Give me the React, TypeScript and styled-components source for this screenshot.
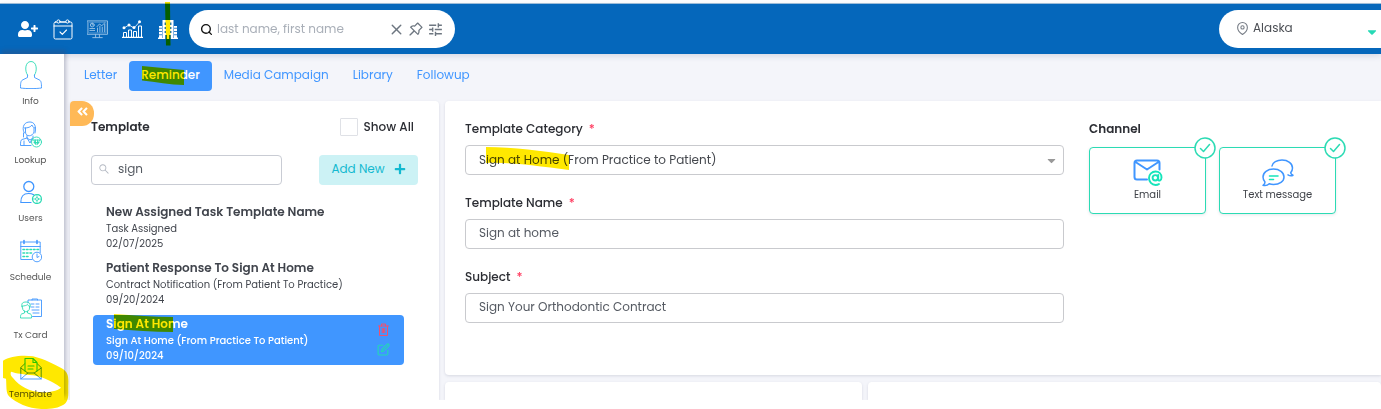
import React from 'react';
import styled, { createGlobalStyle } from 'styled-components';
import { FaUserPlus, FaCaretDown, FaAngleDoubleLeft, FaPlus } from 'react-icons/fa';
import { AiOutlinePushpin, AiOutlineSearch } from 'react-icons/ai';
import { MdTune } from 'react-icons/md';
import { FiEdit, FiMapPin, FiSearch, FiX } from 'react-icons/fi';

const BLUE = '#4096ff';
const TEAL = '#2cdbb4';
const MARKER = '#ffe800';

const GlobalStyle = createGlobalStyle`
  *, *::before, *::after { box-sizing: border-box; }
  body {
    margin: 0;
    background: #fff;
    color: #2b2d33;
    font-family: Poppins, Inter, 'Liberation Sans', sans-serif;
    font-size: 12px;
  }
  button, input, select { font: inherit; color: inherit; margin: 0; }
  button { cursor: pointer; }
`;

const App = styled.div`
  padding: 3px 0 9px;
  background: #fff;
`;

const Header = styled.header`
  position: relative;
  display: flex;
  align-items: center;
  height: 51px;
  padding-left: 17px;
  border-top: 1px solid #9dbcd8;
  background: #0567bb;
  box-shadow: 0 2px 6px rgba(60, 70, 110, 0.16);
`;

const HeaderTools = styled.div`
  display: flex;
  align-items: center;
  gap: 14px;
`;

const ToolButton = styled.button`
  position: relative;
  display: flex;
  justify-content: center;
  width: 21px;
  padding: 0;
  border: 0;
  background: none;
  color: #fff;
`;

const SearchPill = styled.form`
  display: flex;
  align-items: center;
  gap: 4px;
  width: 266px;
  height: 38px;
  margin-left: 11px;
  padding: 0 11px;
  border-radius: 19px;
  background: #fff;
  color: #6d7680;
`;

const PillInput = styled.input`
  flex: 1;
  min-width: 0;
  padding: 0;
  border: 0;
  outline: 0;
  background: none;
  &::placeholder { color: #a9afb8; opacity: 1; }
`;

const PillActions = styled.div`
  display: flex;
  align-items: center;
  gap: 2px;
`;

const PillButton = styled.button`
  display: flex;
  padding: 0;
  border: 0;
  background: none;
  color: inherit;
`;

const LocationPill = styled.button`
  display: flex;
  align-items: center;
  gap: 4px;
  width: 162px;
  height: 38px;
  margin-left: auto;
  padding: 0 2px 2px 17px;
  border: 0;
  border-radius: 19px 0 0 19px;
  background: #fff;
  color: #4c4f55;
`;

const LocationCaret = styled(FaCaretDown)`
  margin: 7px 0 0 auto;
  color: #25d9b5;
`;

const Body = styled.div`
  display: flex;
`;

const Sidebar = styled.nav`
  position: relative;
  display: flex;
  flex-direction: column;
  justify-content: space-between;
  flex: none;
  width: 64px;
  padding: 7px 3px 0 0;
  background: #fff;
  box-shadow: 2px -4px 4px rgba(70, 76, 110, 0.32);
`;

const NavLink = styled.a`
  position: relative;
  display: flex;
  flex-direction: column;
  align-items: center;
  gap: 6px;
  color: #555;
  font-size: 9px;
  line-height: 12px;
  text-decoration: none;
`;

const Main = styled.main`
  flex: 1;
  min-width: 0;
  padding: 7px 0 0 6px;
  background: #f4f5fa;
`;

const Tabs = styled.nav`
  display: flex;
  margin-bottom: 10px;
  padding-left: 2px;
`;

const Tab = styled.a<{ $active?: boolean }>`
  position: relative;
  padding: 0 12px;
  border-radius: 4px;
  background: ${(p) => (p.$active ? BLUE : 'transparent')};
  color: ${(p) => (p.$active ? '#fff' : BLUE)};
  font-weight: ${(p) => (p.$active ? 500 : 400)};
  line-height: 28px;
  height: 30px;
  text-decoration: none;
`;

const Columns = styled.div`
  display: flex;
  gap: 6px;
`;

const Card = styled.section`
  position: relative;
  border-radius: 4px;
  background: #fff;
  box-shadow: 0 1px 3px rgba(60, 66, 100, 0.16);
`;

const ListCard = styled(Card)`
  flex: none;
  width: 369px;
  border-radius: 4px 4px 0 0;
  padding: 17px 21px 34px 21px;
  clip-path: inset(-4px -4px 0 -4px);
`;

const CollapseButton = styled.button`
  position: absolute;
  top: 0;
  left: 0;
  display: flex;
  justify-content: center;
  width: 24px;
  height: 25px;
  padding: 4px 0 0;
  border: 0;
  border-radius: 4px 12px 12px 0;
  background: #ffb957;
  color: #fff;
`;

const Row = styled.div`
  display: flex;
  align-items: center;
  justify-content: space-between;
`;

const ListHead = styled(Row)`
  height: 18px;
  margin-bottom: 19px;
  padding-right: 4px;
`;

const Heading = styled.h2`
  margin: 0;
  color: #2b2d33;
  font-size: 12px;
  font-weight: 600;
  line-height: 18px;
`;

const CheckLabel = styled.label`
  display: flex;
  align-items: center;
  gap: 6px;
  font-weight: 500;
`;

const CheckBox = styled.input`
  appearance: none;
  width: 18px;
  height: 18px;
  margin: 0;
  border: 1px solid #dfe1e6;
  border-radius: 1px;
  background: #fff;
`;

const FilterBox = styled.label`
  display: flex;
  align-items: center;
  gap: 8px;
  width: 191px;
  height: 30px;
  padding: 0 6px 2px;
  border: 1px solid #c9ccd4;
  border-radius: 4px;
  color: #b3b8c2;
`;

const FilterInput = styled(PillInput)`
  color: #555a62;
`;

const AddButton = styled.button`
  display: flex;
  align-items: center;
  justify-content: center;
  gap: 9px;
  width: 99px;
  height: 30px;
  padding: 0 0 2px;
  border: 0;
  border-radius: 4px;
  background: #ccf2f5;
  color: #13b9d0;
`;

const TemplateList = styled.ul`
  display: flex;
  flex-direction: column;
  gap: 6px;
  margin: 18px 14px 0 2px;
  padding: 0;
  list-style: none;
`;

const TemplateItem = styled.li<{ $active?: boolean }>`
  position: relative;
  display: flex;
  align-items: center;
  justify-content: space-between;
  padding: 0 14px 2px 13px;
  border-radius: 4px;
  background: ${(p) => (p.$active ? BLUE : 'transparent')};
  color: ${(p) => (p.$active ? '#fff' : '#40444c')};
  font-size: 10px;
  line-height: 15px;
  font-weight: ${(p) => (p.$active ? 500 : 400)};
`;

const TemplateTitle = styled.h3`
  margin: 0;
  font-size: 12px;
  line-height: 18px;
  font-weight: 600;
`;

const ItemActions = styled.div`
  display: flex;
  flex-direction: column;
  gap: 7px;
`;

const ActionButton = styled(PillButton)<{ $color: string }>`
  justify-content: center;
  color: ${(p) => p.$color};
`;

const Detail = styled.div`
  flex: 1;
  min-width: 0;
  display: flex;
  flex-direction: column;
  gap: 7px;
`;

const FormCard = styled(Card)`
  display: flex;
  gap: 25px;
  padding: 19px 0 52px 20px;
  border-radius: 4px 0 0 4px;
`;

const Fields = styled.form`
  flex: 1;
  min-width: 0;
  display: flex;
  flex-direction: column;
  gap: 19px;
`;

const Field = styled.div`
  position: relative;
  display: flex;
  flex-direction: column;
  gap: 7px;
`;

const FieldLabel = styled.label`
  color: #2b2d33;
  font-weight: 500;
  line-height: 18px;
`;

const Required = styled.span`
  margin-left: 3px;
  color: #ff3b5f;
`;

const FieldInput = styled.input`
  width: 100%;
  height: 30px;
  padding: 0 13px 2px;
  border: 1px solid #c9cace;
  border-radius: 4px;
  outline: 0;
  background: #fff;
  color: #555a62;
`;

const SelectBox = styled.div`
  display: grid;
  align-items: center;
  & > * { grid-area: 1 / 1; }
`;

const FieldSelect = styled(FieldInput).attrs({ as: 'select' })`
  appearance: none;
  color: #45484e;
`;

const SelectCaret = styled(FaCaretDown)`
  justify-self: end;
  margin-right: 6px;
  color: #999;
  pointer-events: none;
`;

const Channel = styled.div`
  flex: none;
  width: 292px;
`;

const ChannelOptions = styled.div`
  display: flex;
  gap: 13px;
  margin-top: 9px;
`;

const ChannelButton = styled.button`
  position: relative;
  display: flex;
  flex-direction: column;
  align-items: center;
  width: 117px;
  height: 67px;
  padding: 11px 0 0;
  border: 1px solid ${TEAL};
  border-radius: 4px;
  background: #fff;
  box-shadow: 0 1px 3px rgba(60, 66, 100, 0.12);
  color: #3f4248;
  font-size: 10px;
  line-height: 16px;
`;

const CheckBadge = styled.svg`
  position: absolute;
  top: -11px;
  right: -11px;
`;

const LowerCards = styled.div`
  display: grid;
  grid-template-columns: 417fr 513fr;
  gap: 6px;
`;

const LowerCard = styled(Card)`
  height: 18px;
  border-radius: 4px 4px 0 0;
  clip-path: inset(-4px -4px 0 -4px);
`;

const Marker = styled.svg<{ $top: number; $left: number }>`
  position: absolute;
  top: ${(p) => p.$top}px;
  left: ${(p) => p.$left}px;
  mix-blend-mode: multiply;
  pointer-events: none;
`;

const line = { fill: 'none', strokeLinecap: 'round' as const, strokeLinejoin: 'round' as const };

const CalendarCheck = () => (
  <svg width="20" height="21" viewBox="0 0 20 21" {...line} stroke="#fff">
    <rect x="1" y="3" width="18" height="17" rx="1.5" />
    <path d="M1 7h18M7 13l2.3 2.3L13.5 11" strokeWidth="1.1" />
    <circle cx="5.5" cy="2.5" r="1.6" fill="#0567bb" />
    <circle cx="14.5" cy="2.5" r="1.6" fill="#0567bb" />
    <path d="M7.5 3h5" />
  </svg>
);

const Monitor = () => (
  <svg width="22" height="19" viewBox="0 0 22 19" {...line} stroke="#a9cbea" strokeWidth=".9">
    <rect x=".5" y=".5" width="21" height="14" />
    <rect x="2" y="2" width="18" height="11" strokeWidth=".4" />
    <circle cx="5.5" cy="4.8" r="2" />
    <path d="M5.5 4.8V3M3 8.5h5M3 10.5h5M11 12V8M13.500 12V6M16 12V7M18.500 12V4M10.500 6.500 13 3.800l2.500 1.700 3-2.800M9 15v2.500M13 15v2.500M6 18h10" />
  </svg>
);

const BarTrend = () => (
  <svg width="21" height="18" viewBox="0 0 21 18" {...line} stroke="#fff">
    <path d="M1.500 17v-4.500h3V17M6.500 17v-7h3v7M11.500 17v-5.500h3V17M16.500 17V6h3v11" />
    <path d="M0 17.400h21" strokeWidth="1.200" />
    <path d="M2 8l5-3 5 3 5.500-6" strokeWidth=".8" />
    <g fill="#fff" stroke="none">
      <circle cx="2" cy="7.800" r="1.500" />
      <circle cx="7" cy="5" r="1.500" />
      <circle cx="12" cy="7.500" r="1.500" />
      <circle cx="17.500" cy="1.800" r="1.500" />
    </g>
  </svg>
);

const Building = () => (
  <svg width="20" height="20" viewBox="0 0 20 20">
    <path fill="#fff" d="M4.500 1h11v6H19v11.500h1V20H0v-1.500h1V7h3.500z" />
    <path fill="#0567bb" opacity=".8" d="M6.500 3.500h1.500V6H6.500zM12 3.500h1.500V6H12zM6.500 8h1.500v2H6.500zM12 8h1.500v2H12zM6.500 12h1.500v2H6.500zM12 12h1.500v2H12zM1 8.800h3v1H1zM1 12h3v1H1zM1 15.200h3v1H1zM16 8.800h3v1h-3zM16 12h3v1h-3zM16 15.200h3v1h-3zM4.200 7h.6v12h-.6zM15.200 7h.6v12h-.6zM7 16h2v4H7zM11 16h2v4h-2z" />
  </svg>
);

const NavSvg = ({ children }: { children: React.ReactNode }) => (
  <svg width="22" height="28" viewBox="0 0 22 28" {...line} stroke={BLUE} strokeWidth=".9">
    {children}
  </svg>
);

const InfoIcon = () => (
  <NavSvg>
    <path stroke={TEAL} d="M7.500 14C4.500 10 5 .5 11 .5S17.500 10 14.500 14" />
    <path d="M7.500 14v2.500L2.500 19C.8 20 .5 22 .5 27c5 .8 16 .8 21 0 0-5-.3-7-2-8l-5-2.500V14" />
  </NavSvg>
);

const LookupIcon = () => (
  <NavSvg>
    <path d="M4.500 13C2 10 2.500 2.500 9 2c6-.5 7.500 5 6 11M4.500 8c4 0 6-1 7.500-3 .5 2 2 3 3.500 3M5.500 8v4c0 5 7 5 8.500 0V8M3.500 13v4M7 15.500V18l3 2 3-2v-2M7 18l-5 1.500C.7 20 .5 22 .5 25.500H11M4 21v4M7 18l3 5 2-4" />
    <g stroke={TEAL}>
      <circle cx="16.500" cy="22" r="5" />
      <path d="M12.500 20h8M14 22.500h5M14 20l1 4h3l1.500-4M15.500 20v4M17.500 20v4" />
    </g>
  </NavSvg>
);

const UsersIcon = () => (
  <NavSvg>
    <circle cx="8.800" cy="8.500" r="5" strokeWidth="1.300" />
    <path strokeWidth="1.200" d="M11 24.500H.8C.8 18 3 15.500 8.500 15.500c2.500 0 4 .5 5.200 1.300" />
    <g stroke={TEAL}>
      <circle cx="17" cy="21" r="4.500" strokeDasharray="2 .7" strokeWidth="1.200" />
      <circle cx="17" cy="21" r="1.500" />
      <path d="M17 17.500v1M17 23.500v1M13.500 21h1M19.500 21h1" />
    </g>
  </NavSvg>
);

const ScheduleIcon = () => (
  <NavSvg>
    <path d="M.8 5h19.400v11M.8 5v17.500H12M.8 9.500h19.400" />
    <path d="M4 3.500v3M17 3.500v3" strokeWidth="1.600" />
    <path stroke={TEAL} strokeWidth="1.600" d="M3 12.500h1.500M6.500 12.500H8M10 12.500h1.500M13.500 12.500H15M17 12.500h1.500M3 16h1.500M6.500 16H8M10 16h1.500M3 19.500h1.500M6.500 19.500H8" />
    <circle cx="17" cy="20" r="4.800" fill="#fff" />
    <path d="M17 17v3.500l2-1" />
  </NavSvg>
);

const TxCardIcon = () => (
  <NavSvg>
    <path d="M8 8V5h13.500v16.500h-9M12 5V4h5.500v1M11 9h3M16 9h3M11 12h3M16 12h3M12 15h7M13 18h6" />
    <g stroke={TEAL}>
      <path d="M2 12c-1-4 1-5 4-5s5 1.500 4 5M2.500 11c2 0 4-.5 5-1.500.5 1 1 1.500 2 1.500v2c0 5-7 5-7 0zM4.500 16v2L1.500 19C.7 19.500.5 20.500.5 23h11c0-2.500 0-3.500-1-4l-3-1v-2" />
    </g>
  </NavSvg>
);

const TemplateIcon = () => (
  <NavSvg>
    <path d="M5 9.500.8 13.500V25h20.400V13.500L17 9.500M.8 14l7 5h6.400l7-5M.8 25l7-6M21.200 25l-7-6" />
    <path stroke={TEAL} strokeWidth="1.100" d="M5 17V4.500h8l4 4V17M13 4.500v4h4M8 12h6M8 15h5" />
  </NavSvg>
);

const TrashIcon = () => (
  <svg width="11" height="13" viewBox="0 0 11 13" {...line} stroke="currentColor">
    <path d="M.5 3h10M3.500 3V1h4v2M1.500 3v9.500h8V3M4.200 5.500v4.200M5.500 5.500v4.200M6.800 5.500v4.200" />
  </svg>
);

const EmailIcon = () => (
  <svg width="30" height="28" viewBox="0 0 30 28" {...line}>
    <path stroke={BLUE} strokeWidth="2" d="M14 20.500H4c-1.600 0-2.500-1-2.500-2.500V4c0-1.600 1-2.500 2.500-2.500h20c1.600 0 2.500 1 2.500 2.500v6.500M2.500 3 14 10.500 25.500 3" />
    <g stroke="#16e5bb" strokeWidth="1.900">
      <circle cx="22.300" cy="18.800" r="2.700" />
      <path d="M25.200 16v4.500c0 1.800 3.300 1.500 3.300-2C28.500 15 26 12.500 22.500 12.500s-6.500 2.800-6.500 6.500 2.800 7 6.500 7c1.400 0 2.600-.3 3.500-1" />
    </g>
  </svg>
);

const ChatIcon = () => (
  <svg width="32" height="28" viewBox="0 0 32 28" {...line} stroke={BLUE} strokeWidth="1.500">
    <path d="M10 7C10.500 3.500 15 1 20 1c6 0 10.500 3.500 10.500 8 0 2-.8 3.500-1.800 4.800.3 1.400 1.200 2 2.300 2.500-1.500.8-3.500.5-5-.5" />
    <path d="M11.500 10C17.500 10 22 13.500 22 18s-4.500 7.500-10.500 7.500c-1.500 0-3-.2-4.300-.7-1.500 1.500-4 2-6.200 1.500 1.300-.8 2-2 2-3.300C1.700 21.600 1 19.900 1 18c0-4.500 4.500-8 10.500-8z" />
    <path stroke="#16e5bb" strokeWidth="1.600" d="M7.500 17H16M7.500 20.500h4" />
  </svg>
);

const SelectedBadge = () => (
  <CheckBadge width="22" height="22" viewBox="0 0 22 22" {...line} stroke={TEAL}>
    <circle cx="11" cy="11" r="10" fill="#fff" strokeWidth="1.500" />
    <path strokeWidth="1.500" d="M6.500 11.500 9.500 14.500 15.500 7.500" />
  </CheckBadge>
);

const navItems = [
  { label: 'Info', icon: <InfoIcon /> },
  { label: 'Lookup', icon: <LookupIcon /> },
  { label: 'Users', icon: <UsersIcon /> },
  { label: 'Schedule', icon: <ScheduleIcon /> },
  { label: 'Tx Card', icon: <TxCardIcon /> },
  { label: 'Template', icon: <TemplateIcon /> },
];

const templates = [
  { title: 'New Assigned Task Template Name', category: 'Task Assigned', date: '02/07/2025' },
  { title: 'Patient Response To Sign At Home', category: 'Contract Notification (From Patient To Practice)', date: '09/20/2024' },
  { title: 'Sign At Home', category: 'Sign At Home (From Practice To Patient)', date: '09/10/2024', active: true },
];

export default function TemplatePage() {
  return (
    <App>
      <GlobalStyle />
      <Header>
        <HeaderTools>
          <ToolButton aria-label="Add patient"><FaUserPlus size={20} /></ToolButton>
          <ToolButton aria-label="Calendar"><CalendarCheck /></ToolButton>
          <ToolButton aria-label="Dashboard"><Monitor /></ToolButton>
          <ToolButton aria-label="Reports"><BarTrend /></ToolButton>
          <ToolButton aria-label="Practice">
            <Building />
            <Marker $top={-17} $left={8} width="6" height="44" viewBox="0 0 6 44">
              <path fill={MARKER} d="M0 0h5l.5 43.500H1z" />
            </Marker>
          </ToolButton>
        </HeaderTools>
        <SearchPill>
          <FiSearch size={13} color="#111" strokeWidth={2.5} />
          <PillInput aria-label="Search patient" placeholder="last name, first name" />
          <PillActions>
            <PillButton type="button" aria-label="Clear"><FiX size={17} /></PillButton>
            <PillButton type="button" aria-label="Pin"><AiOutlinePushpin size={18} /></PillButton>
            <PillButton type="button" aria-label="Filters"><MdTune size={17} /></PillButton>
          </PillActions>
        </SearchPill>
        <LocationPill>
          <FiMapPin size={13} color="#777d86" />
          Alaska
          <LocationCaret size={14} />
        </LocationPill>
      </Header>
      <Body>
        <Sidebar>
          {navItems.map((item) => (
            <NavLink key={item.label} href="#">
              {item.icon}
              {item.label}
              {item.label === 'Template' && (
                <Marker $top={0} $left={3} width="67" height="56" viewBox="0 0 201 168">
                  <path
                    fill={MARKER}
                    fillRule="evenodd"
                    d="M0 20C20 8 55 2 90 7c35 8 65 25 90 38 15 10 17 25 16 45-1 25 3 45-8 57-15 15-45 19-73 18-40-1-75-18-97-38C8 115 11 95 9 74L0 72ZM24 53C22 60 22 64 30 72c20 25 50 41 85 43 20 1 45-3 59-14C145 80 110 66 90 64 65 61 38 58 24 53Z"
                  />
                </Marker>
              )}
            </NavLink>
          ))}
        </Sidebar>
        <Main>
          <Tabs>
            <Tab href="#">Letter</Tab>
            <Tab href="#" $active>
              Reminder
              <Marker $top={5} $left={13} width="43" height="19" viewBox="0 0 43 19">
                <path fill={MARKER} d="M0 0c14 1 28 3 42 4v15C28 19 14 16 0 14.500z" />
              </Marker>
            </Tab>
            <Tab href="#">Media Campaign</Tab>
            <Tab href="#">Library</Tab>
            <Tab href="#">Followup</Tab>
          </Tabs>
          <Columns>
            <ListCard>
              <CollapseButton aria-label="Collapse panel"><FaAngleDoubleLeft size={13} /></CollapseButton>
              <ListHead>
                <Heading>Template</Heading>
                <CheckLabel><CheckBox type="checkbox" />Show All</CheckLabel>
              </ListHead>
              <Row>
                <FilterBox>
                  <AiOutlineSearch size={12} />
                  <FilterInput aria-label="Filter templates" defaultValue="sign" />
                </FilterBox>
                <AddButton>Add New<FaPlus size={12} /></AddButton>
              </Row>
              <TemplateList>
                {templates.map((t) => (
                  <TemplateItem key={t.title} $active={t.active}>
                    <div>
                      <TemplateTitle>{t.title}</TemplateTitle>
                      <div>{t.category}</div>
                      <div>{t.date}</div>
                    </div>
                    {t.active && (
                      <>
                        <ItemActions>
                          <ActionButton $color="#f0506e" aria-label="Delete"><TrashIcon /></ActionButton>
                          <ActionButton $color="#22d9b4" aria-label="Edit"><FiEdit size={13} /></ActionButton>
                        </ItemActions>
                        <Marker $top={-1} $left={21} width="60" height="19" viewBox="0 0 60 19">
                          <path fill={MARKER} d="M0 0c20 1 40 3 59 3v15c-20 0-40-2-59-3z" />
                        </Marker>
                      </>
                    )}
                  </TemplateItem>
                ))}
              </TemplateList>
            </ListCard>
            <Detail>
              <FormCard>
                <Fields>
                  <Field>
                    <FieldLabel htmlFor="category">Template Category <Required>*</Required></FieldLabel>
                    <SelectBox>
                      <FieldSelect id="category">
                        <option>Sign at Home (From Practice to Patient)</option>
                      </FieldSelect>
                      <SelectCaret size={13} />
                    </SelectBox>
                    <Marker $top={27} $left={21} width="84" height="23" viewBox="0 0 84 23">
                      <path fill={MARKER} d="M0 0c28 0 56 4 83 8v15C56 20 28 15 0 16z" />
                    </Marker>
                  </Field>
                  <Field>
                    <FieldLabel htmlFor="name">Template Name <Required>*</Required></FieldLabel>
                    <FieldInput id="name" defaultValue="Sign at home" />
                  </Field>
                  <Field>
                    <FieldLabel htmlFor="subject">Subject <Required>*</Required></FieldLabel>
                    <FieldInput id="subject" defaultValue="Sign Your Orthodontic Contract" />
                  </Field>
                </Fields>
                <Channel>
                  <Heading>Channel</Heading>
                  <ChannelOptions>
                    <ChannelButton><EmailIcon />Email<SelectedBadge /></ChannelButton>
                    <ChannelButton><ChatIcon />Text message<SelectedBadge /></ChannelButton>
                  </ChannelOptions>
                </Channel>
              </FormCard>
              <LowerCards>
                <LowerCard />
                <LowerCard />
              </LowerCards>
            </Detail>
          </Columns>
        </Main>
      </Body>
    </App>
  );
}
